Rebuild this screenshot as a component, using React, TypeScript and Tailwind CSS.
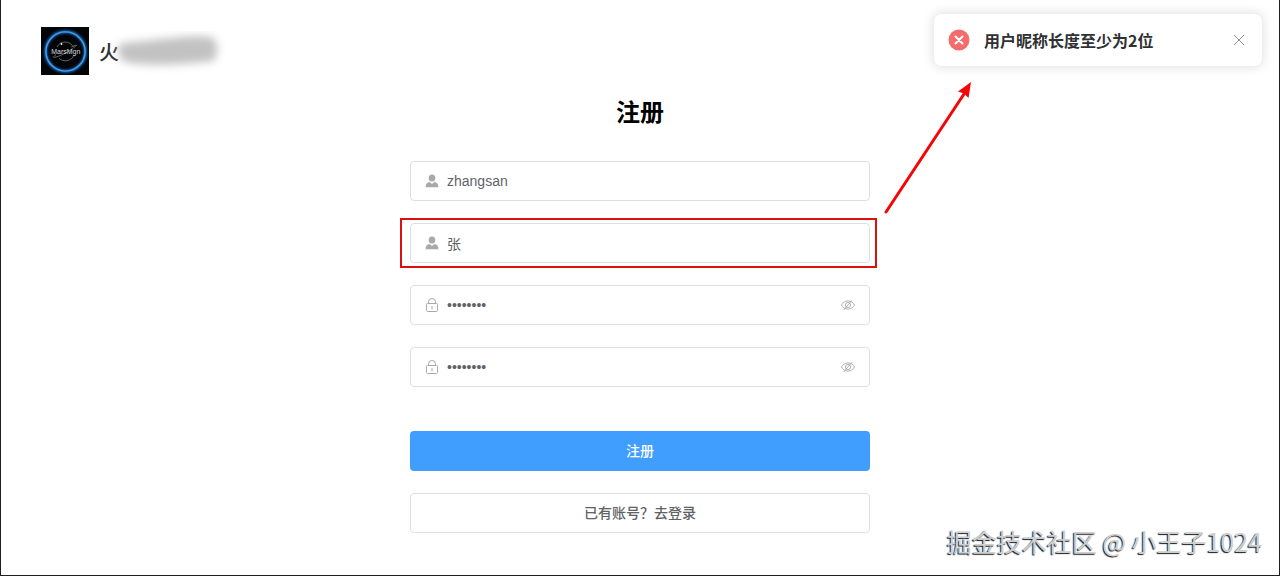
import React, { useState } from 'react';

type IconProps = { className?: string; title?: string };

function UserIcon({ className, title }: IconProps) {
  return (
    <svg viewBox="0 0 14 14" className={className} fill="currentColor" role="img" aria-label={title}>
      <ellipse cx="7" cy="4" rx="3.300" ry="3.500" />
      <path d="M.6 13.200c0-3.200 1.400-4.900 4.100-5.200L7 9.900l2.300-1.900c2.700.3 4.100 2 4.100 5.200Z" />
    </svg>
  );
}

function LockIcon({ className, title }: IconProps) {
  return (
    <svg viewBox="0 0 14 16" className={className} fill="none" stroke="currentColor" role="img" aria-label={title}>
      <rect x="1.500" y="6.500" width="11" height="8" rx="1" />
      <path d="M3.500 6.500V5a3.500 3.500 0 0 1 7 0v1.500" />
      <path d="M7 9v3.400" />
    </svg>
  );
}

function HiddenEyeIcon({ className }: IconProps) {
  return (
    <svg viewBox="0 0 14 14" className={className} fill="none" stroke="currentColor" strokeWidth="0.9" aria-hidden="true">
      <path d="M.5 7C2 4.300 4.200 2.900 7 2.900S12 4.300 13.500 7C12 9.700 9.800 11.100 7 11.100S2 9.700.5 7Z" />
      <circle cx="7" cy="7" r="2.600" />
      <path d="M11 2.300 2.600 12" />
    </svg>
  );
}

function Logo({ className }: IconProps) {
  return (
    <svg viewBox="0 0 48 48" className={className} role="img" aria-label="MarsMgn">
      <defs>
        <filter id="logo-glow" x="-20%" y="-20%" width="140%" height="140%">
          <feGaussianBlur stdDeviation="1.300" />
        </filter>
      </defs>
      <rect width="48" height="48" fill="#030508" />
      <circle cx="24.500" cy="24.500" r="19.800" fill="none" stroke="#176fd0" strokeWidth="3" filter="url(#logo-glow)" />
      <circle cx="24.500" cy="24.500" r="19.600" fill="none" stroke="#4a9ee8" strokeWidth="1.400" />
      <g fill="none" stroke="#8b8d90" strokeWidth="0.7">
        <path d="M16 20a9.200 9.200 0 0 1 16-.5M33 28a9.200 9.200 0 0 1-15 3.200" />
        <path d="M15 27.500c-3 2.500-3.500 3.500 0 2.500C22 28 31 22.500 35.500 18.500c-1.500-.5-3.500.7-5 1.500" />
      </g>
      <circle cx="20.500" cy="17" r="0.9" fill="#ffffff" />
      <text x="24.800" y="27.200" textAnchor="middle" fill="#d8dade" fontSize="7" fontFamily="Liberation Sans, sans-serif">
        MarsMgn
      </text>
    </svg>
  );
}

type FieldProps = {
  id: string;
  label: string;
  value: string;
  onChange: (value: string) => void;
  password?: boolean;
  children?: React.ReactNode;
};

function Field({ id, label, value, onChange, password = false, children }: FieldProps) {
  const [visible, setVisible] = useState(false);

  return (
    <div className="relative">
      <div className="flex h-10 items-center rounded border border-[#dcdfe6] bg-white px-3.5 focus-within:border-[#409eff]">
        <label htmlFor={id} className="flex w-[22px] shrink-0 text-[#a9a9a9]">
          {password ? <LockIcon className="h-4 w-3.5" title={label} /> : <UserIcon className="size-3.5" title={label} />}
        </label>
        <input
          id={id}
          type={password && !visible ? 'password' : 'text'}
          value={value}
          onChange={(e) => onChange(e.target.value)}
          className="h-full min-w-0 flex-1 bg-transparent text-sm text-[#606266] outline-none"
        />
        {password && (
          <button type="button" aria-label="显示密码" onClick={() => setVisible(!visible)} className="ml-2 text-[#a9a9a9]">
            <HiddenEyeIcon className="size-3.5" />
          </button>
        )}
      </div>
      {children}
    </div>
  );
}

export default function App() {
  const [username, setUsername] = useState('zhangsan');
  const [nickname, setNickname] = useState('张');
  const [password, setPassword] = useState('12345678');
  const [confirm, setConfirm] = useState('12345678');
  const [showNotice, setShowNotice] = useState(true);

  return (
    <div className="relative min-h-screen overflow-hidden border-x border-b border-[#1f1f1f] bg-white font-['Liberation_Sans','Noto_Sans_CJK_SC',sans-serif]">
      {/* Brand */}
      <header className="flex items-center gap-2.5 px-10 pt-[27px]">
        <Logo className="size-12" />
        <div className="flex items-center pt-1 text-xl font-medium text-[#303133]">
          <span>火</span>
          <svg viewBox="0 0 120 44" className="-my-2 -ml-3 h-11 w-[120px]" aria-hidden="true">
            <defs>
              <filter id="name-blur" x="-10%" y="-40%" width="120%" height="180%">
                <feGaussianBlur stdDeviation="4" />
              </filter>
            </defs>
            <path
              d="M14 12C40 11 80 3 104 6 112 10 112 25 106 30 80 33 45 36 18 31 10 26 10 16 14 12Z"
              fill="#c2c2c2"
              filter="url(#name-blur)"
            />
          </svg>
        </div>
      </header>

      {/* Register form */}
      <main className="mx-auto w-full max-w-[460px] pb-[42px]">
        <h2 className="mt-[22px] mb-8 text-center text-2xl font-bold text-black">注册</h2>
        <form onSubmit={(e) => e.preventDefault()}>
          <div className="flex flex-col gap-[22px]">
            <Field id="username" label="用户名" value={username} onChange={setUsername} />
            <Field id="nickname" label="用户昵称" value={nickname} onChange={setNickname}>
              <div className="pointer-events-none absolute -inset-y-[5px] -right-[7px] -left-2.5 border-2 border-[#d9110f]" />
              <svg
                viewBox="0 0 96 140"
                className="pointer-events-none absolute bottom-[45px] left-full ml-3 h-[140px] w-24"
                aria-hidden="true"
              >
                <path d="M4 134 82 16" stroke="#f40606" strokeWidth="3" strokeLinecap="round" />
                <path d="M89 4 86.500 20 82 15.500 76 13.500Z" fill="#f40606" />
              </svg>
            </Field>
            <Field id="password" label="密码" value={password} onChange={setPassword} password />
            <Field id="confirm" label="确认密码" value={confirm} onChange={setConfirm} password />
          </div>
          <div className="mt-11 flex flex-col gap-[22px]">
            <button type="submit" className="h-10 rounded bg-[#409eff] text-sm font-medium text-white">
              注册
            </button>
            <button type="button" className="h-10 rounded border border-[#dcdfe6] bg-white text-sm font-medium text-[#606266]">
              已有账号？去登录
            </button>
          </div>
        </form>
      </main>

      {/* Notification */}
      {showNotice && (
        <div
          role="alert"
          className="absolute top-[13px] right-4 flex h-[54px] w-[330px] items-center rounded-lg border border-[#ebeef5] bg-white pr-[17px] pl-3.5 shadow-[0_0_12px_rgba(0,0,0,0.12)]"
        >
          <svg viewBox="0 0 22 22" className="size-[22px] shrink-0" aria-hidden="true">
            <circle cx="11" cy="11" r="10.500" fill="#f56c6c" />
            <path d="m7.500 7.500 7 7m0-7-7 7" stroke="#ffffff" strokeWidth="2" strokeLinecap="round" />
          </svg>
          <p className="ml-3.5 flex-1 font-['Noto_Sans_CJK_SC',sans-serif] text-base font-bold text-[#303133]">
            用户昵称长度至少为2位
          </p>
          <button type="button" aria-label="关闭" onClick={() => setShowNotice(false)}>
            <svg viewBox="0 0 12 12" className="size-3" fill="none" stroke="#909399" aria-hidden="true">
              <path d="m1 1 10 10M11 1 1 11" />
            </svg>
          </button>
        </div>
      )}

      {/* Watermark */}
      <p className="pointer-events-none absolute right-[17px] bottom-3.5 font-['Noto_Sans_CJK_SC',sans-serif] text-[25px] leading-10 text-[#cfcfcf] [text-shadow:-1px_1px_1px_#1a1a1a]">
        掘金技术社区 @ 小王子1024
      </p>
    </div>
  );
}
